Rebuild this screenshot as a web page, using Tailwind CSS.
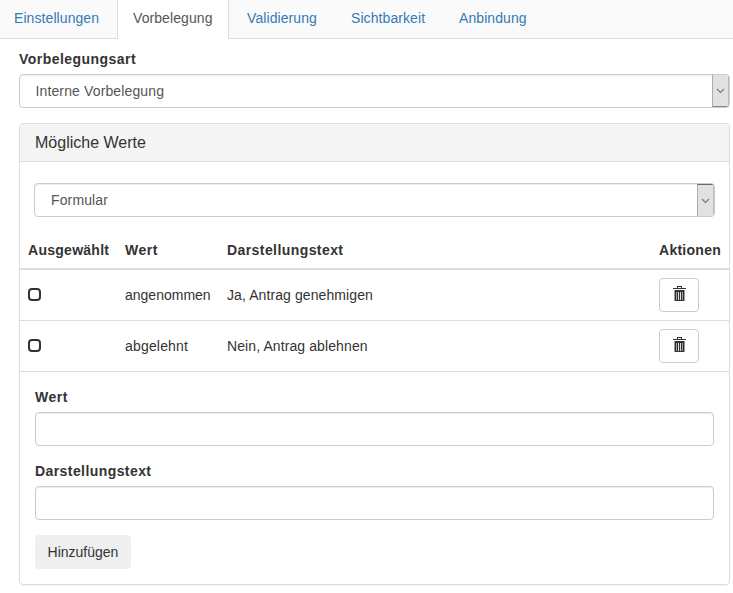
<!DOCTYPE html>
<html lang="de">
<head>
<meta charset="utf-8">
<title>Vorbelegung</title>
<script src="https://cdn.jsdelivr.net/npm/@tailwindcss/browser@4"></script>
</head>
<body class="bg-white text-[#333] text-[14px] leading-5 font-['Liberation_Sans',Arial,sans-serif] h-[593px] overflow-hidden">
<nav class="flex h-[39px] bg-[#fafafa] border-b border-[#ddd] text-[#337ab7] leading-[37px] tracking-[0.08px]">
  <a class="w-[117px] pl-[14px]">Einstellungen</a>
  <a class="w-[112px] h-[39px] pl-[15px] bg-white border-x border-[#ddd] text-[#555]">Vorbelegung</a>
  <a class="w-[104px] pl-[18px]">Validierung</a>
  <a class="w-[108px] pl-[18px]">Sichtbarkeit</a>
  <a class="pl-[18px]">Anbindung</a>
</nav>
<main class="pl-[19px] pr-[3px] pt-[10px]">
  <label class="block font-bold mb-[5px] tracking-[0.46px]">Vorbelegungsart</label>
  <div class="flex h-[34px] border border-[#ccc] rounded-[4px] shadow-[inset_0_1px_1px_rgba(0,0,0,0.075)] overflow-hidden text-[#555]">
    <span class="flex-1 pl-[15.5px] leading-8 tracking-[0.13px]">Interne Vorbelegung</span>
    <span class="w-[17px] bg-[#e1e1e1] border-l border-r border-b border-l-[#adadad] border-r-[#bbb] border-b-[#888] flex items-center justify-center">
      <svg width="9" height="6" viewBox="0 0 9 6" fill="none" stroke="#777" stroke-width="1.1"><path d="M1 1l3.5 3.5L8 1"/></svg>
    </span>
  </div>
  <section class="mt-[15px] h-[462px] border border-[#ddd] rounded-[4px] shadow-[0_1px_1px_rgba(0,0,0,0.05)]">
    <h3 class="h-[38px] bg-[#f4f4f4] border-b border-[#ddd] rounded-t-[3px] pl-[15px] text-[16px] leading-[37px]">Mögliche Werte</h3>
    <div class="mt-[21px] ml-[14px] mr-[14px] flex h-[34px] border border-[#ccc] rounded-[4px] shadow-[inset_0_1px_1px_rgba(0,0,0,0.075)] overflow-hidden text-[#555]">
      <span class="flex-1 pl-[16px] leading-8 tracking-[0.13px]">Formular</span>
      <span class="w-[17px] bg-[#e1e1e1] border-l border-r border-t border-l-[#adadad] border-r-[#bbb] border-t-[#666] flex items-center justify-center">
        <svg width="9" height="6" viewBox="0 0 9 6" fill="none" stroke="#777" stroke-width="1.1"><path d="M1 1l3.5 3.5L8 1"/></svg>
      </span>
    </div>
    <div class="grid grid-cols-[97px_102px_432px_1fr] pl-[8px] mt-[15px] h-[38px] pt-[8px] border-b-2 border-[#ddd] font-bold">
      <span class="tracking-[0.27px]">Ausgewählt</span><span class="tracking-[0.5px]">Wert</span><span class="tracking-[0.42px]">Darstellungstext</span><span class="tracking-[0.27px]">Aktionen</span>
    </div>
    <div class="grid grid-cols-[97px_102px_432px_1fr] items-center pl-[8px] h-[51px] border-b border-[#ddd]">
      <span class="size-[13px] mb-[2px] border-2 border-[#333] rounded-[4px]"></span><span>angenommen</span><span class="tracking-[0.09px]">Ja, Antrag genehmigen</span>
      <button class="w-[40px] h-[34px] border border-[#ccc] rounded-[4px] flex justify-center pt-[7px]">
        <svg width="13" height="16" viewBox="0 0 13 16" shape-rendering="crispEdges"><path fill="#333" d="M4 0h5v2h4v1H0V2h4zM5 1v1h3V1zM2 4h9v11H2z"/><path fill="#999" d="M1 4h1v11H1zM11 4h1v11h-1zM3 6h1v8H3zM9 6h1v8H9z"/><path fill="#ddd" d="M5 6h1v8H5zM7 6h1v8H7z"/></svg>
      </button>
    </div>
    <div class="grid grid-cols-[97px_102px_432px_1fr] items-center pl-[8px] h-[51px] border-b border-[#ddd]">
      <span class="size-[13px] mb-[2px] border-2 border-[#333] rounded-[4px]"></span><span class="tracking-[0.18px]">abgelehnt</span><span class="tracking-[0.1px]">Nein, Antrag ablehnen</span>
      <button class="w-[40px] h-[34px] border border-[#ccc] rounded-[4px] flex justify-center pt-[7px]">
        <svg width="13" height="16" viewBox="0 0 13 16" shape-rendering="crispEdges"><path fill="#333" d="M4 0h5v2h4v1H0V2h4zM5 1v1h3V1zM2 4h9v11H2z"/><path fill="#999" d="M1 4h1v11H1zM11 4h1v11h-1zM3 6h1v8H3zM9 6h1v8H9z"/><path fill="#ddd" d="M5 6h1v8H5zM7 6h1v8H7z"/></svg>
      </button>
    </div>
    <div class="px-[15px] pt-[15px]">
      <label class="block font-bold mb-[5px] tracking-[0.5px]">Wert</label>
      <input class="block w-full h-[34px] border border-[#ccc] rounded-[4px] shadow-[inset_0_1px_1px_rgba(0,0,0,0.075)]">
      <label class="block font-bold mb-[5px] mt-[15px] tracking-[0.42px]">Darstellungstext</label>
      <input class="block w-full h-[34px] border border-[#ccc] rounded-[4px] shadow-[inset_0_1px_1px_rgba(0,0,0,0.075)]">
      <button class="mt-[15px] w-[96px] h-[34px] rounded-[4px] bg-[#efefef]">Hinzufügen</button>
    </div>
  </section>
</main>
</body>
</html>
